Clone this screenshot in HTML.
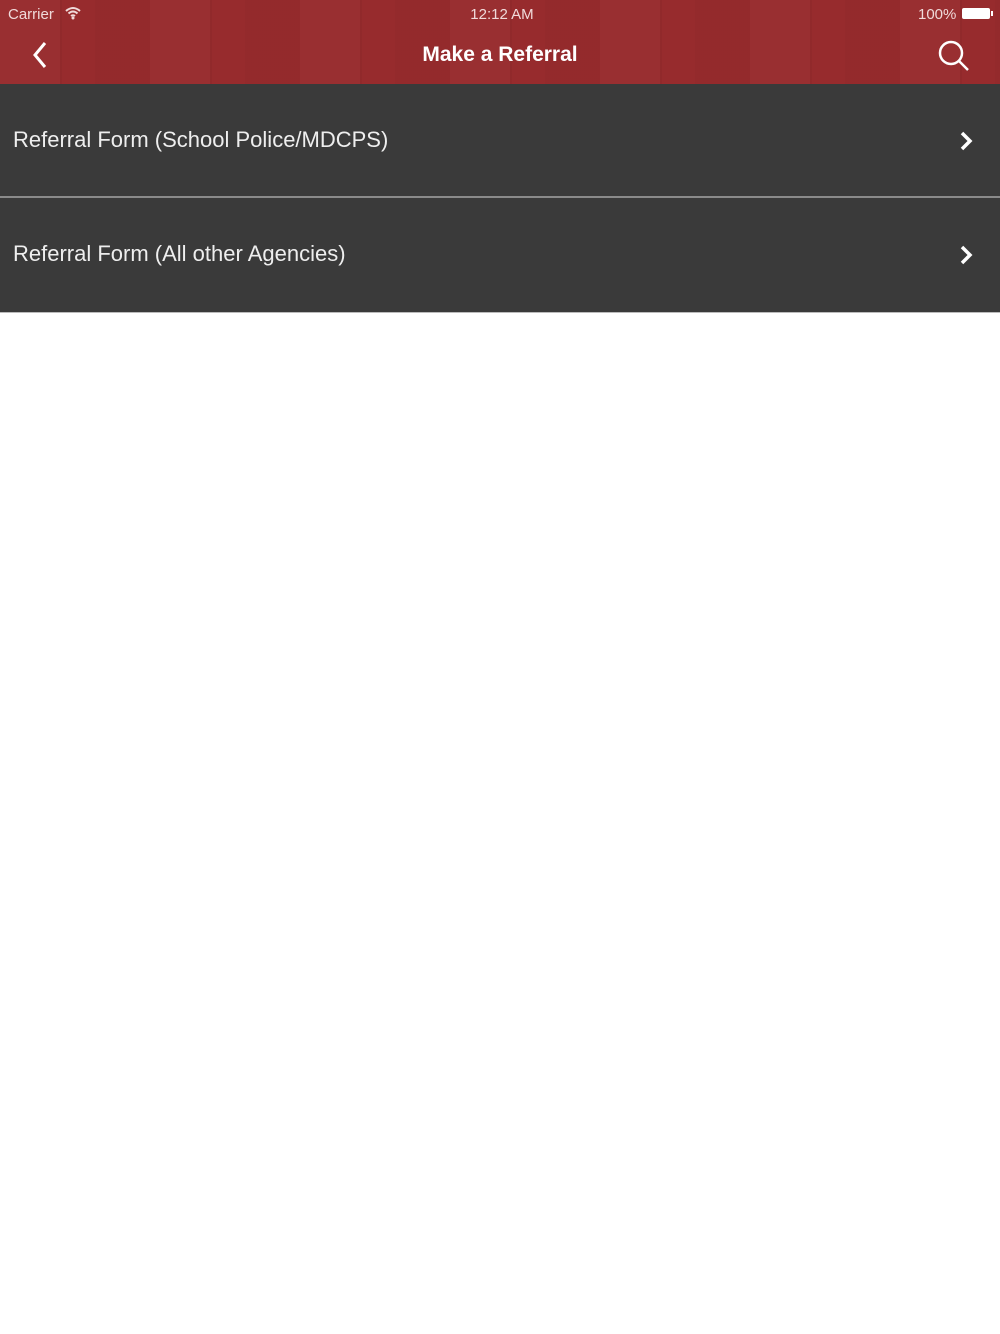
<!DOCTYPE html>
<html><head><meta charset="utf-8"><style>
*{margin:0;padding:0;box-sizing:border-box}
body{width:1000px;height:1334px;background:#fff;font-family:"Liberation Sans",sans-serif;position:relative;overflow:hidden}
.hdr{position:absolute;left:0;top:0;width:1000px;height:84px;background:#972b2d;
background-image:repeating-linear-gradient(90deg,rgba(255,255,255,0.02) 0 60px,rgba(0,0,0,0.04) 60px 62px,rgba(255,255,255,0.0) 62px 95px,rgba(0,0,0,0.025) 95px 150px)}
.st{position:absolute;top:6px;color:#f0dada;font-size:15px}
.title{position:absolute;top:43px;left:0;width:1000px;text-align:center;color:#fff;font-size:21px;font-weight:bold}
.row{position:absolute;left:0;width:1000px;height:114px;background:#3a3a3a;color:#eee;font-size:22px}
.row span{position:absolute;left:13px;top:43px}
.row svg{position:absolute;left:958px;top:47px}
</style></head><body>
<div class="hdr">
<div class="st" style="left:8px">Carrier</div>
<svg style="position:absolute;left:64px;top:6px" width="18" height="14" viewBox="0 0 18 14"><path d="M2 5 Q9 -1 16 5 M4.5 7.5 Q9 3.5 13.5 7.5 M7 10 Q9 8.5 11 10" stroke="#f0dada" stroke-width="2" fill="none"/><circle cx="9" cy="12" r="1.5" fill="#f0dada"/></svg>
<div class="st" style="left:2px;width:1000px;text-align:center">12:12 AM</div>
<div class="st" style="left:918px">100%</div>
<div style="position:absolute;left:962px;top:8px;width:28px;height:11px;background:#fff;border-radius:2px"></div>
<div style="position:absolute;left:991px;top:11px;width:2px;height:5px;background:#fff"></div>
<svg style="position:absolute;left:30px;top:40px" width="20" height="30" viewBox="0 0 20 30"><path d="M15 3 L5 15 L15 27" stroke="#fff" stroke-width="3" fill="none"/></svg>
<div class="title">Make a Referral</div>
<svg style="position:absolute;left:936px;top:38px" width="36" height="34" viewBox="0 0 36 34"><circle cx="15" cy="15" r="11" stroke="#fff" stroke-width="2.5" fill="none"/><path d="M23 23 L32 32" stroke="#fff" stroke-width="2.5"/></svg>
</div>
<div class="row" style="top:84px"><span>Referral Form (School Police/MDCPS)</span><svg width="16" height="20" viewBox="0 0 16 20"><path d="M4 2 L12 10 L4 18" stroke="#fff" stroke-width="3.5" fill="none"/></svg></div>
<div style="position:absolute;left:0;top:196px;width:1000px;height:2px;background:#8a8a8a"></div>
<div class="row" style="top:198px"><span>Referral Form (All other Agencies)</span><svg width="16" height="20" viewBox="0 0 16 20"><path d="M4 2 L12 10 L4 18" stroke="#fff" stroke-width="3.5" fill="none"/></svg></div>
<div style="position:absolute;left:0;top:312px;width:1000px;height:1px;background:#bbb"></div>
</body></html>
